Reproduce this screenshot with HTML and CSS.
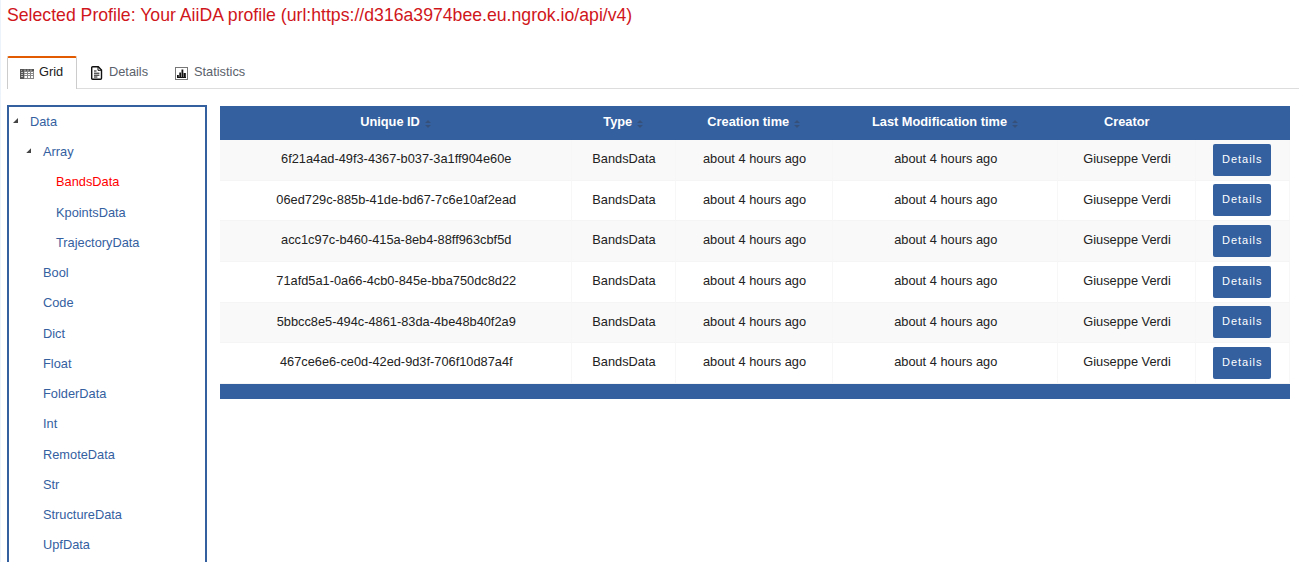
FILE: index.html
```html
<!DOCTYPE html>
<html lang="en">
<head>
<meta charset="utf-8">
<title>Grid</title>
<link rel="stylesheet" href="styles.css">
</head>
<body>
<main class="page">
<h1 class="profile">Selected Profile: Your AiiDA profile (url:https://d316a3974bee.eu.ngrok.io/api/v4)</h1>
<nav class="tabs">
<a class="tab active"><svg class="grid-icon" width="14" height="10" viewBox="0 0 14 10"><rect width="14" height="10" fill="#888"/><path d="M0 0h14v2H0zM0 2h4v8H0z" fill="#555"/><path d="M4.5 3H7v1H4.5zM8 3h2v1H8zM11 3h2v1h-2zM4.5 5H7v1H4.5zM8 5h2v1H8zM11 5h2v1h-2zM4.5 7H7v2H4.5zM8 7h2v2H8zM11 7h2v2h-2z" fill="#fff"/><path d="M1 3h2v1H1zM1 5h2v1H1zM1 7h2v1H1zM1 1h1v.7H1zM4 .8h2v.7H4zM7 .8h2v.7H7zM10 .8h2v.7h-2z" fill="#bbb"/></svg><span>Grid</span></a>
<a class="tab details-tab"><svg class="doc-icon" width="12" height="14" viewBox="0 0 12 14" fill="none" stroke="#111"><path d="M1.7.8h5.6l3.2 3.3v8.1q0 1-1 1H1.7q-1 0-1-1V1.8q0-1 1-1z" stroke-width="1.4"/><path d="M7 1v3.3h3.4M3 5h2.5M3 7.2h5.4M3 9.2h5.4M3 11h3.4"/></svg><span>Details</span></a>
<a class="tab stats-tab"><svg class="chart-icon" width="13" height="13" viewBox="0 0 13 13"><rect x=".5" y=".5" width="12" height="12" fill="#fff" stroke="#777"/><path d="M2 8h1.8v3H2zM4.3 5.5H6V11H4.3zM6.5 2.5h1.8V11H6.5zM8.7 6h2.1v5H8.7zM2 10h9v1H2z" fill="#111"/></svg><span>Statistics</span></a>
</nav>
<div class="content">
<aside class="tree">
<a class="node root"><i class="arrow"></i>Data</a>
<a class="node level1"><i class="arrow"></i>Array</a>
<a class="node level2 selected">BandsData</a>
<a class="node level2">KpointsData</a>
<a class="node level2">TrajectoryData</a>
<a class="node level1">Bool</a>
<a class="node level1">Code</a>
<a class="node level1">Dict</a>
<a class="node level1">Float</a>
<a class="node level1">FolderData</a>
<a class="node level1">Int</a>
<a class="node level1">RemoteData</a>
<a class="node level1">Str</a>
<a class="node level1">StructureData</a>
<a class="node level1">UpfData</a>
</aside>
<section class="table">
<div class="row head"><span>Unique ID<i class="sort"></i></span><span>Type<i class="sort"></i></span><span>Creation time<i class="sort"></i></span><span>Last Modification time<i class="sort"></i></span><span>Creator</span><span></span></div>
<div class="row"><span class="uid">6f21a4ad-49f3-4367-b037-3a1ff904e60e</span><span>BandsData</span><span>about 4 hours ago</span><span>about 4 hours ago</span><span>Giuseppe Verdi</span><span class="action"><button class="btn">Details</button></span></div>
<div class="row"><span class="uid">06ed729c-885b-41de-bd67-7c6e10af2ead</span><span>BandsData</span><span>about 4 hours ago</span><span>about 4 hours ago</span><span>Giuseppe Verdi</span><span class="action"><button class="btn">Details</button></span></div>
<div class="row"><span class="uid">acc1c97c-b460-415a-8eb4-88ff963cbf5d</span><span>BandsData</span><span>about 4 hours ago</span><span>about 4 hours ago</span><span>Giuseppe Verdi</span><span class="action"><button class="btn">Details</button></span></div>
<div class="row"><span class="uid">71afd5a1-0a66-4cb0-845e-bba750dc8d22</span><span>BandsData</span><span>about 4 hours ago</span><span>about 4 hours ago</span><span>Giuseppe Verdi</span><span class="action"><button class="btn">Details</button></span></div>
<div class="row"><span class="uid">5bbcc8e5-494c-4861-83da-4be48b40f2a9</span><span>BandsData</span><span>about 4 hours ago</span><span>about 4 hours ago</span><span>Giuseppe Verdi</span><span class="action"><button class="btn">Details</button></span></div>
<div class="row"><span class="uid">467ce6e6-ce0d-42ed-9d3f-706f10d87a4f</span><span>BandsData</span><span>about 4 hours ago</span><span>about 4 hours ago</span><span>Giuseppe Verdi</span><span class="action"><button class="btn">Details</button></span></div>
<div class="foot"></div>
</section>
</div>
</main>
</body>
</html>
```
FILE: styles.css
```css
* { box-sizing: border-box; }
body { margin: 0; background: #fff; font: 12.8px/20px "Liberation Sans", Arial, sans-serif; color: #222; }
.page { height: 562px; overflow: hidden; border-left: 1px solid #edf3fa; padding: 0 5px 0 6px; }
.profile { margin: 0; height: 56px; padding-top: 5px; font-size: 17.66px; line-height: 21px; font-weight: 400; color: #d0161b; white-space: nowrap; }
.tabs { display: flex; height: 33px; border-bottom: 1px solid #ddd; }
.tab { display: flex; align-items: center; height: 33px; color: #5b616b; }
.tab.active { width: 70px; padding-left: 12px; gap: 5px; color: #212121; background: #fff; border: 1px solid #ccc; border-top: 2px solid #e35b00; border-bottom: 0; border-radius: 2px 2px 0 0; }
.details-tab { width: 84px; padding-left: 14px; gap: 6px; }
.stats-tab { padding-left: 14px; gap: 6px; }
.tab svg { margin-top: 1px; }
.tab.active svg { margin-top: 0; }
.tab span { padding-bottom: 2px; }
.tab.active span { padding-bottom: 4px; }
.content { display: flex; gap: 13px; padding-top: 16px; }
.tree { width: 200px; height: 470px; border: 2px solid #34609f; }
.node { display: flex; align-items: center; height: 30.23px; color: #34609f; }
.root { padding-left: 4px; }
.level1 { padding-left: 34px; }
.level2 { padding-left: 47px; }
.selected { color: #f00; padding-bottom: 1px; }
.arrow { width: 5px; height: 5px; margin: -3px 12px 0 0; background: #444; clip-path: polygon(100% 0, 100% 100%, 0 100%); }
.level1:has(.arrow) { padding-left: 17px; }
.table { width: 1070px; padding-top: 1px; }
.row { display: grid; grid-template-columns: 352px 103.5px 157.5px 225px 137.5px 94.5px; height: 40.67px; }
.row span { display: flex; align-items: center; justify-content: center; padding: 0 0 1.4px 1.5px; border-right: 1px solid #f7f7f7; border-bottom: 1px solid #f5f5f5; }
.row .action { padding: 0 0 2px; }
.row:nth-child(even) { background: #f9f9f9; }
.row.head { height: 34px; background: #34609f; color: #fff; font-weight: 700; }
.row.head span { border: 0; padding: 0 0 2px; }
.sort { display: flex; flex-direction: column; gap: 2px; width: 6px; margin: 4px 1px 0 5px; }
.sort::before, .sort::after { content: ""; border: 3px solid transparent; }
.sort::before { border-top: 0; border-bottom-color: #36507c; }
.sort::after { border-bottom: 0; border-top-color: #36507c; }
.btn { width: 58px; height: 32px; margin-top: 2px; padding: 0 0 2px; border: 0; border-radius: 2px; background: #34609f; color: #fff; font: 11px/16px "Liberation Sans", Arial, sans-serif; letter-spacing: 1px; }
.foot { height: 15px; background: #34609f; }
```
